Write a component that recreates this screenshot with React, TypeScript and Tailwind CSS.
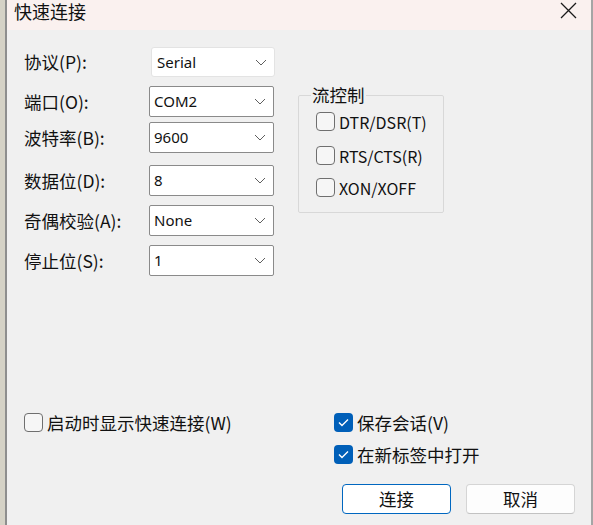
import React from 'react';

const cjk = "font-['Noto_Sans_CJK_SC',sans-serif]";
const latin = "font-['Noto_Sans','Noto_Sans_CJK_SC',sans-serif]";

const fields = [
  { label: '协议(P):', value: 'Serial', flat: true, gap: 'mt-0' },
  { label: '端口(O):', value: 'COM2', flat: false, gap: 'mt-[9px]' },
  { label: '波特率(B):', value: '9600', flat: false, gap: 'mt-[5px]' },
  { label: '数据位(D):', value: '8', flat: false, gap: 'mt-[12px]' },
  { label: '奇偶校验(A):', value: 'None', flat: false, gap: 'mt-[9px]' },
  { label: '停止位(S):', value: '1', flat: false, gap: 'mt-[9px]' },
];

function Chevron() {
  return (
    <svg width="12" height="7" viewBox="0 0 12 7" className="shrink-0">
      <path d="M1 1 L6 6 L11 1" fill="none" stroke="#5f5f5f" strokeWidth="1" />
    </svg>
  );
}

function Combo({ value, flat }: { value: string; flat: boolean }) {
  return (
    <div
      className={
        flat
          ? 'ml-[2px] flex h-[30px] w-[124px] items-center justify-between rounded-[3px] border border-[#e3e3e3] bg-white pl-[5px] pr-[7px]'
          : 'flex h-[31px] w-[125px] items-center justify-between rounded-[2px] border border-[#8a8a8a] bg-white pl-[4px] pr-[7px]'
      }
    >
      <span className={`${latin} text-[15px] leading-none text-[#111]`}>{value}</span>
      <Chevron />
    </div>
  );
}

function Check({ checked, label, latinText }: { checked?: boolean; label: string; latinText?: boolean }) {
  return (
    <div className="flex h-[19px] items-center">
      {checked ? (
        <span className="flex h-[19px] w-[19px] items-center justify-center rounded-[4px] bg-[#005fb8]">
          <svg width="11" height="9" viewBox="0 0 11 9">
            <path d="M1 4.5 L4 7.5 L10 1.5" fill="none" stroke="#fff" strokeWidth="1.4" />
          </svg>
        </span>
      ) : (
        <span className="h-[19px] w-[19px] rounded-[4px] border border-[#6f6f6f] bg-[#f6f6f6]" />
      )}
      <span
        className={`${cjk} ml-[4px] leading-none text-[#111] ${latinText ? 'text-[16px]' : 'text-[17.5px]'}`}
      >
        {label}
      </span>
    </div>
  );
}

export default function App() {
  return (
    <div className="flex h-[525px] w-[593px] overflow-hidden bg-[#f0f0f0]">
      <div className="w-[5px] bg-[#d5d2c6]" />
      <div className="w-[2px] bg-[#8e8e8e]" />
      <div className="flex flex-1 flex-col">
        <div className="flex h-[30px] items-start justify-between bg-[#faf1ef] pl-[7px] pr-[14px] pt-[2px]">
          <span className={`${cjk} text-[18px] leading-[18px] text-[#111]`}>快速连接</span>
          <svg width="17" height="17" viewBox="0 0 17 17">
            <path d="M1 1 L16 16 M16 1 L1 16" stroke="#1a1a1a" strokeWidth="1.3" />
          </svg>
        </div>

        <div className="flex flex-1 flex-col pl-[17px]">
          <div className="flex pt-[17px]">
            <div className="flex flex-col">
              {fields.map((f) => (
                <div key={f.label} className={`flex items-center ${f.gap}`}>
                  <span className={`${cjk} w-[125px] text-[17.5px] leading-none text-[#111]`}>{f.label}</span>
                  <Combo value={f.value} flat={f.flat} />
                </div>
              ))}
            </div>

            <fieldset className="ml-[23px] mt-[38px] h-[128px] w-[146px] rounded-[2px] border border-[#d8d8d8] pb-[15px] pl-[17px]">
              <legend className={`${cjk} -ml-[5px] px-[1px] text-[17.5px] leading-[20px] text-[#111]`}>流控制</legend>
              <div className="mt-[7px] flex flex-col">
                <Check latinText label="DTR/DSR(T)" />
                <div className="mt-[15px]">
                  <Check latinText label="RTS/CTS(R)" />
                </div>
                <div className="mt-[13px]">
                  <Check latinText label="XON/XOFF" />
                </div>
              </div>
            </fieldset>
          </div>

          <div className="mt-auto flex pb-[11px]">
            <div className="w-[310px]">
              <Check label="启动时显示快速连接(W)" />
            </div>
            <div className="flex flex-col">
              <Check checked label="保存会话(V)" />
              <div className="mt-[13px]">
                <Check checked label="在新标签中打开" />
              </div>
              <div className="ml-[8px] mt-[20px] flex gap-[15px]">
                <button className={`${cjk} h-[30px] w-[109px] rounded-[4px] border border-[#0067c0] bg-white text-[17.5px] text-[#111]`}>
                  连接
                </button>
                <button className={`${cjk} h-[30px] w-[109px] rounded-[4px] border border-[#d5d5d5] border-b-[#c2c2c2] bg-[#fdfdfd] text-[17.5px] text-[#111]`}>
                  取消
                </button>
              </div>
            </div>
          </div>
        </div>
      </div>
      <div className="w-[2px] bg-[#a5a5a5]" />
    </div>
  );
}
